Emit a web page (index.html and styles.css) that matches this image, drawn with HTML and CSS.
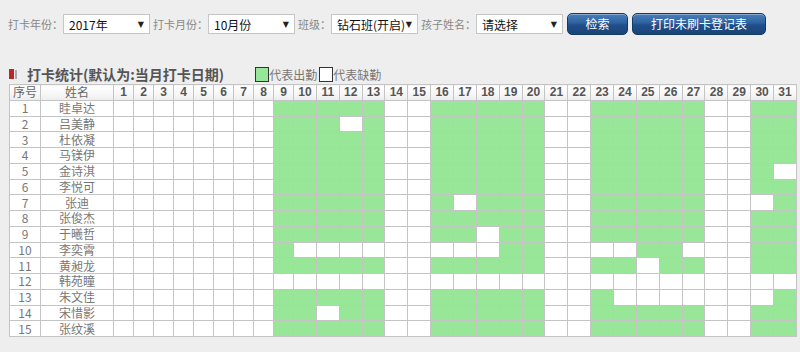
FILE: index.html
```html
<!DOCTYPE HTML>
<html>
    <head>
        <meta charset="UTF-8">
        <title>打卡统计</title>
        <link rel="stylesheet" href="styles.css">
    </head>
    <body>
        <div class="toolbar">
            <span class="lbl first">打卡年份：</span>
            <div class="sel"><span>2017年</span><i>▼</i></div>
            <span class="lbl">打卡月份：</span>
            <div class="sel"><span>10月份</span><i>▼</i></div>
            <span class="lbl">班级：</span>
            <div class="sel"><span>钻石班(开启)</span><i>▼</i></div>
            <span class="lbl">孩子姓名：</span>
            <div class="sel"><span>请选择</span><i>▼</i></div>
            <button class="btn btn-search">检索</button>
            <button class="btn btn-print">打印未刷卡登记表</button>
        </div>

        <div class="title">
            <span class="mark"></span><span class="mark2"></span>
            <h2>打卡统计(默认为:当月打卡日期)</h2>
            <span class="box on"></span><span class="leg">代表出勤</span>
            <span class="box"></span><span class="leg">代表缺勤</span>
        </div>

        <table id="grid" class="grid">
            <colgroup></colgroup>
            <thead><tr><th>序号</th><th>姓名</th></tr></thead>
            <tbody></tbody>
        </table>

        <script>
            (function(){
                var names = ["眭卓达","吕美静","杜依凝","马镁伊","金诗淇","李悦可","张迪","张俊杰","于曦哲","李奕霄","黄昶龙","韩苑瞳","朱文佳","宋惜影","张纹溪"];
                //当月上课日
                var workDays = [9,10,11,12,13,16,17,18,19,20,23,24,25,26,27,30,31];
                //缺勤记录 序号:[日期]
                var absent = {
                    2:[12], 5:[31], 7:[17,30], 9:[18],
                    10:[10,11,12,13,16,17,18,23,24,27],
                    11:[25], 12:workDays, 13:[24,25,26,27,30], 14:[11]
                };
                var cols = '<col class="c-no"><col class="c-name">';
                var head = "";
                for (var d = 1; d <= 31; d++) {
                    cols += d < 10 ? '<col class="c-day">' : '<col>';
                    head += "<th>" + d + "</th>";
                }
                document.querySelector("#grid colgroup").innerHTML = cols;
                document.querySelector("#grid thead tr").innerHTML += head;

                var body = "";
                names.forEach(function(name, i){
                    var no = i + 1;
                    var miss = absent[no] || [];
                    body += "<tr><td>" + no + "</td><td>" + name + "</td>";
                    for (var d = 1; d <= 31; d++) {
                        var on = workDays.indexOf(d) > -1 && miss.indexOf(d) === -1;
                        body += on ? '<td class="on"></td>' : "<td></td>";
                    }
                    body += "</tr>";
                });
                document.querySelector("#grid tbody").innerHTML = body;
            })();
        </script>
    </body>
</html>
```

FILE: styles.css
```css
body{
    margin: 0;
    background: #eeeeee;
    font-family: "Microsoft YaHei","Noto Sans CJK SC",sans-serif;
    color: #666;
}
h2{margin:0;}

.toolbar{
    display: flex;
    align-items: center;
    height: 22px;
    padding: 13px 0 0 8px;
}
.toolbar .lbl{
    margin-left: 3px;
    font-size: 11px;
    color: #888;
    white-space: nowrap;
}
.toolbar .lbl.first{
    margin-left: 0;
}
.toolbar .sel{
    display: flex;
    align-items: center;
    justify-content: space-between;
    box-sizing: border-box;
    width: 87px;
    height: 20px;
    padding: 0 5px 0 5px;
    border: 1px solid #c6c6c6;
    background: #fff;
    font-size: 12px;
    color: #111;
    white-space: nowrap;
}
.toolbar .sel i{
    font-style: normal;
    font-size: 8px;
    font-family: "DejaVu Sans",sans-serif;
    color: #222;
}
.btn{
    box-sizing: border-box;
    height: 22px;
    margin-left: 4px;
    padding: 0;
    border: 1px solid #143a66;
    border-radius: 5px;
    background-image: linear-gradient(to bottom,#4a7fba 0%,#2d62a0 45%,#1f4f8a 55%,#1a4478 100%);
    box-shadow: inset 0 1px 0 rgba(255,255,255,.35);
    font-family: "Microsoft YaHei","Noto Sans CJK SC",sans-serif;
    font-size: 12px;
    line-height: 20px;
    color: #fff;
}
.btn-search{
    width: 61px;
}
.btn-print{
    width: 134px;
}

.title{
    display: flex;
    align-items: center;
    height: 20px;
    margin-top: 29px;
    padding-left: 9px;
}
.title .mark{
    width: 5px;
    height: 10px;
    background: #b3292b;
}
.title .mark2{
    width: 2px;
    height: 9px;
    margin-left: 1px;
    background: #aaa;
}
.title h2{
    margin-left: 10px;
    font-size: 14px;
    font-weight: bold;
    color: #555;
    white-space: nowrap;
}
.title .box{
    width: 12px;
    height: 13px;
    margin-left: 31px;
    border: 1px solid #333;
    background: #fff;
}
.title .box.on{
    background: #98e698;
}
.title .leg + .box{
    margin-left: 2px;
}
.title .leg{
    font-size: 12px;
    color: #777;
    white-space: nowrap;
}

.grid{
    width: 788px;
    margin-left: 9px;
    border-collapse: collapse;
    table-layout: fixed;
    background: #fff;
}
.grid col.c-no{width: 31px;}
.grid col.c-name{width: 73px;}
.grid col.c-day{width: 20px;}
.grid tr{
    height: 15.75px;
}
.grid th,.grid td{
    padding: 0;
    border: 1px solid #c4c4c4;
    font-size: 12px;
    line-height: 14px;
    text-align: center;
    white-space: nowrap;
    overflow: hidden;
}
.grid th{
    background-image: linear-gradient(to bottom,#fff 0%,#f6f6f6 60%,#ececec 100%);
    font-family: "Liberation Sans",Arial,sans-serif;
    font-weight: bold;
    color: #555;
}
.grid th:nth-child(-n+2){
    font-family: "Microsoft YaHei","Noto Sans CJK SC",sans-serif;
    font-weight: normal;
    color: #666;
}
.grid td{
    color: #777;
}
.grid td.on{
    background: #98e698;
}
```
